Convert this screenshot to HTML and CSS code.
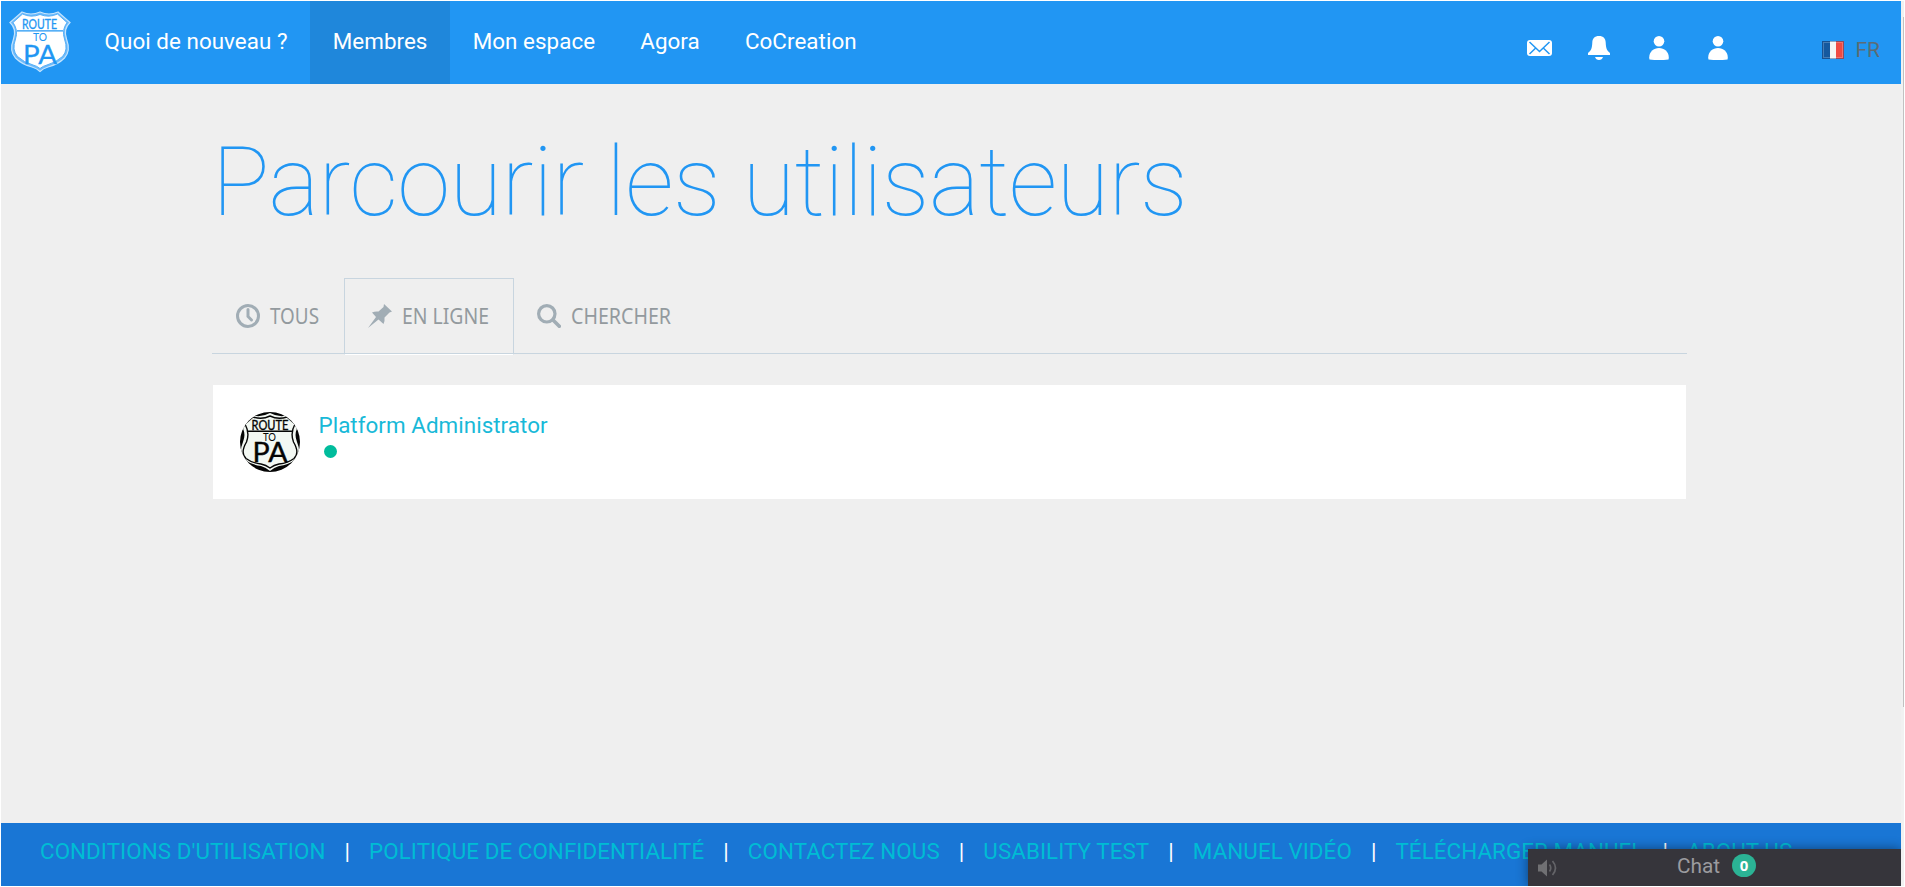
FILE: index.html
```html
<!DOCTYPE html>
<html lang="fr">
<head>
<meta charset="utf-8">
<title>Parcourir les utilisateurs</title>
<link rel="stylesheet" href="styles.css">
</head>
<body>
<div class="page">
  <header class="topbar">
    <svg class="logo" width="64" height="64" viewBox="0 0 64 64">
      <path d="M14 2 Q23 6 32 2 Q41 6 50 2 L62 12.500 Q55 19 58.500 29 Q63 41 56.500 48 Q50 54.500 40 57 Q35 58.500 32 61.500 Q29 58.500 24 57 Q14 54.500 7.500 48 Q1 41 5.500 29 Q9 19 2 12.500Z" fill="#6dbafa" stroke="#c5e4fd" stroke-width="1.200"/>
      <path d="M14.500 4 Q23 8 32 4.500 Q41 8 49.500 4 L59 12.500 Q53.500 20 56.500 29 Q60.500 40 54.500 46.500 Q48 52.500 39 55 Q35 56 32 58.500 Q29 56 25 55 Q16 52.500 9.500 46.500 Q3.500 40 7.500 29 Q10.500 20 5 12.500Z" fill="#fff" stroke="#55aff8" stroke-width="1"/>
      <path d="M9 20.800H55" stroke="#2196f3" stroke-width="1.300"/>
      <g fill="#2196f3" stroke="#2196f3" text-anchor="middle">
        <text class="shield-text" x="31.500" y="18.800" font-size="13" stroke-width=".3" textLength="35" lengthAdjust="spacingAndGlyphs">ROUTE</text>
        <text class="shield-text" x="32" y="31.200" font-size="11" stroke="none" textLength="14" lengthAdjust="spacingAndGlyphs">TO</text>
        <text class="shield-text" x="32" y="53.500" font-size="27.500" stroke-width=".3" textLength="34" lengthAdjust="spacingAndGlyphs">PA</text>
      </g>
    </svg>
    <nav class="nav">
      <a class="nav-item">Quoi de nouveau ?</a>
      <a class="nav-item active">Membres</a>
      <a class="nav-item">Mon espace</a>
      <a class="nav-item">Agora</a>
      <a class="nav-item">CoCreation</a>
    </nav>
    <div class="tools">
      <svg class="mail" width="25" height="16" viewBox="0 0 25 16"><rect width="25" height="16" rx="3" fill="#fff"/><path d="M2.500 2 L12.500 11.500 L22.500 2 M2.500 14 L9 7.800 M22.500 14 L16 7.800" fill="none" stroke="#2196f3" stroke-width="1.500"/></svg>
      <svg class="bell" width="22" height="24" viewBox="0 0 22 24"><path d="M11 0C15.500 0 17.500 2.500 17.700 6.500C18 13 19 14.500 22 17V19H0V17C3 14.500 4 13 4.300 6.500C4.500 2.500 6.500 0 11 0ZM7 21H15Q14 24 11 24Q8 24 7 21Z" fill="#fff"/></svg>
      <svg class="person" width="20" height="24" viewBox="0 0 20 24"><circle cx="10" cy="5.300" r="5.300" fill="#fff"/><path d="M0.500 23.500C-1 17 4 12 10 12S21 17 19.500 23.500Q10 24.500 .5 23.500Z" fill="#fff"/></svg>
      <svg class="person" width="20" height="24" viewBox="0 0 20 24"><circle cx="10" cy="5.300" r="5.300" fill="#fff"/><path d="M0.500 23.500C-1 17 4 12 10 12S21 17 19.500 23.500Q10 24.500 .5 23.500Z" fill="#fff"/></svg>
    </div>
    <div class="lang">
      <svg width="22" height="18" viewBox="0 0 22 18">
        <path d="M0 0H8V18H0Z" fill="#15599f"/><path d="M8 0H14V18H8Z" fill="#f4f4f4"/><path d="M14 0H22V18H14Z" fill="#ef4a43"/>
        <rect x="1.500" y="1.500" width="19" height="15" fill="none" stroke="#fff" stroke-opacity=".22"/>
        <rect x=".5" y=".5" width="21" height="17" fill="none" stroke="#1c4a80" stroke-opacity=".45"/>
      </svg>
      <span>FR</span>
    </div>
  </header>

  <main class="content">
    <h1 class="title">Parcourir les utilisateurs</h1>
    <div class="tabs">
      <a class="tab tab-all">
        <svg width="24" height="24" viewBox="0 0 24 24" fill="none" stroke="#a1adb5"><circle cx="12" cy="12" r="10.500" stroke-width="3"/><path d="M12 5.500V12.500L15.500 16" stroke-width="3" stroke-linecap="round"/></svg>
        <svg class="tab-label" width="50" height="30"><text x="0" y="20" textLength="49" lengthAdjust="spacingAndGlyphs">TOUS</text></svg>
      </a>
      <a class="tab tab-online">
        <svg width="24" height="24" viewBox="0 0 24 24" fill="#a1adb5"><path d="M16 0L24 7.500L21.500 8.500L16.500 13.500Q17 17 15.500 20L10.500 15.500L0 24L8 13L4 8.500Q7 7 10.500 7.500L15.500 3Z"/></svg>
        <svg class="tab-label" width="90" height="30"><text x="0" y="20" textLength="87" lengthAdjust="spacingAndGlyphs">EN LIGNE</text></svg>
      </a>
      <a class="tab tab-search">
        <svg width="24" height="24" viewBox="0 0 24 24" fill="none" stroke="#a1adb5"><circle cx="9.800" cy="9.800" r="8.200" stroke-width="3.200"/><path d="M16 16L22.300 22.300" stroke-width="3.600" stroke-linecap="round"/></svg>
        <svg class="tab-label" width="104" height="30"><text x="0" y="20" textLength="100" lengthAdjust="spacingAndGlyphs">CHERCHER</text></svg>
      </a>
    </div>
    <section class="card">
      <svg class="avatar" width="60" height="60" viewBox="0 0 60 60">
        <defs><clipPath id="round"><circle cx="30" cy="30" r="30"/></clipPath></defs>
        <g clip-path="url(#round)">
          <rect width="60" height="60" fill="#050505"/>
          <path d="M11 3Q21 6 30 1Q39 6 49 3L60 12Q53 20 57 30Q62 42 55 48Q48 53 39 54Q33 56 30 59Q27 56 21 54Q12 53 5 48Q-2 42 3 30Q7 20 0 12Z" fill="#f3f8f3"/>
          <path d="M13 5Q22 8 30 4Q38 8 47 5L55 12Q50 21 53.500 30Q60 41 54 46.500Q48 51 39 52Q34 53 30 56Q26 53 21 52Q12 51 6 46.500Q0 41 6.500 30Q10 21 5 12Z" fill="#f3f8f3" stroke="#050505" stroke-width="1.400"/>
          <path d="M8 19.300H52" stroke="#050505" stroke-width="1.600"/>
          <g fill="#050505" stroke="#050505" text-anchor="middle">
            <text class="shield-text" x="30" y="18" font-size="14" stroke-width=".4" textLength="37" lengthAdjust="spacingAndGlyphs">ROUTE</text>
            <text class="shield-text" x="29.500" y="29" font-size="11" stroke="none" textLength="13" lengthAdjust="spacingAndGlyphs">TO</text>
            <text class="shield-text" x="30" y="50" font-size="26" stroke-width=".4" textLength="35" lengthAdjust="spacingAndGlyphs">PA</text>
          </g>
        </g>
      </svg>
      <div class="user">
        <a class="user-name">Platform Administrator</a>
        <span class="dot"></span>
      </div>
    </section>
  </main>

  <footer class="footer">
    <a>CONDITIONS D'UTILISATION</a><i>|</i>
    <a>POLITIQUE DE CONFIDENTIALITÉ</a><i>|</i>
    <a>CONTACTEZ NOUS</a><i>|</i>
    <a>USABILITY TEST</a><i>|</i>
    <a>MANUEL VIDÉO</a><i>|</i>
    <a>TÉLÉCHARGER MANUEL</a><i>|</i>
    <a>ABOUT US</a>
  </footer>
  <aside class="chat">
    <svg class="speaker" width="20" height="18" viewBox="0 0 20 18"><path d="M0 5.500H3.500L9 .5V17.500L3.500 12.500H0Z" fill="#707073"/><path d="M11.500 5.500Q14 9 11.500 12.500M14.500 2Q20.500 9 14.500 16" fill="none" stroke="#646468" stroke-width="1.700"/></svg>
    <span class="chat-label">Chat</span>
    <span class="badge">0</span>
  </aside>
</div>
<div class="scroll"><div class="thumb"></div></div>
</body>
</html>
```
FILE: styles.css
```css
* { box-sizing: border-box; }
body {
  margin: 0;
  padding: 1px;
  height: 887px;
  display: flex;
  overflow: hidden;
  background: #fff;
  font-family: Roboto, sans-serif;
}
.page {
  position: relative;
  width: 1900px;
  height: 885px;
  display: flex;
  flex-direction: column;
  background: #efefef;
  overflow: hidden;
}
.scroll { width: 3px; height: 885px; background: #f1f1f1; padding: 16px 0 0 2px; }
.thumb { width: 1px; height: 690px; background: #c1c1c1; }

.topbar { height: 83px; flex: none; display: flex; background: #2196f3; }
.logo { margin: 9px 10px 0 7px; flex: none; }
.shield-text { font-family: Lato, sans-serif; }
.nav { display: flex; }
.nav-item {
  padding: 0 22.6px;
  line-height: 80px;
  font-size: 22.4px;
  letter-spacing: .04px;
  color: #fff;
  white-space: nowrap;
}
.nav-item.active { background: #1f87db; }
.tools { display: flex; margin-left: auto; padding-top: 35px; }
.mail { margin: 4px 36px 0 0; }
.bell { margin-right: 39px; }
.person + .person { margin-left: 39px; }
.lang { display: flex; margin: 40px 21px 0 94px; gap: 11px; font-size: 21px; line-height: 18px; color: #5c6c75; }

.content { flex: 1; padding: 0 214px 0 211px; }
.title {
  margin: 0;
  padding: 42px 0 0 0;
  height: 194px;
  font-size: 96px;
  font-weight: 100;
  line-height: 112px;
  letter-spacing: -.6px;
  color: #2196f3;
  white-space: nowrap;
}
.tabs { display: flex; height: 76px; border-bottom: 1px solid #c8d5df; }
.tab {
  display: flex;
  padding-top: 26px;
  height: 77px;
  gap: 10px;
}
.tab-label {
  overflow: visible;
  font-family: "Noto Sans", "Open Sans", sans-serif;
  font-size: 21.5px;
  fill: #939a9e;
}
.tab-all { width: 132px; padding-left: 24px; }
.tab-online { width: 170px; padding: 25px 0 0 23px; border: 1px solid #c8d5df; border-bottom-color: #fff; }
.tab-search { padding-left: 23px; }
.card {
  margin: 31px 1px 0;
  height: 114px;
  display: flex;
  padding: 27px 27px;
  background: #fff;
}
.user { margin-left: 18.500px; display: flex; flex-direction: column; }
.user-name { font-size: 22.4px; line-height: 28px; letter-spacing: .04px; margin-top: -1px; color: #18b9d8; }
.dot { width: 13px; height: 13px; border-radius: 50%; background: #00bc9c; margin: 6px 0 0 5.500px; }

.footer {
  height: 63px;
  flex: none;
  display: flex;
  padding-left: 39px;
  font-size: 22.4px;
  letter-spacing: .055px;
  line-height: 57px;
  background: #1976d5;
  color: #00bcd4;
  white-space: nowrap;
}
.footer i { width: 43.600px; text-align: center; font-style: normal; color: #fff; }

.chat {
  position: absolute;
  right: 0;
  bottom: 0;
  width: 373px;
  height: 37px;
  display: flex;
  padding-left: 10px;
  background: #36353b;
  box-shadow: 0 0 12px rgba(0, 0, 0, .45);
}
.speaker { margin-top: 10px; }
.chat-label { margin-left: 119px; font-size: 20.8px; line-height: 34px; color: #9b9b9f; }
.badge {
  margin: 5px 0 0 12px;
  width: 24px;
  height: 23px;
  border-radius: 12px;
  background: #2bb395;
  color: #fff;
  font: bold 15px/22px "Open Sans", sans-serif;
  text-align: center;
}
```
